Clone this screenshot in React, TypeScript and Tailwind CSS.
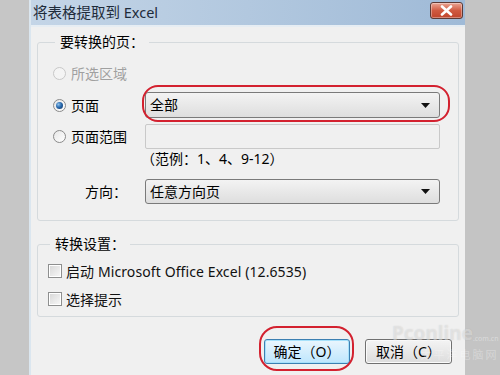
import React from "react";

const font = "font-['Noto_Sans','Noto_Sans_CJK_SC',sans-serif]";

function Radio({ checked, disabled }: { checked?: boolean; disabled?: boolean }) {
  return (
    <span
      className={`flex h-[13px] w-[13px] items-center justify-center rounded-full border ${
        disabled ? "border-[#c8c8c8] bg-[#f4f4f4]" : "border-[#8a8a8a] bg-gradient-to-br from-[#e6e6e6] to-[#ffffff]"
      }`}
    >
      {checked && (
        <span className="h-[7px] w-[7px] rounded-full bg-[radial-gradient(circle_at_35%_35%,#8fc1ea_0%,#2a6bb0_45%,#0f2f5a_100%)]" />
      )}
    </span>
  );
}

function Checkbox() {
  return (
    <span className="flex h-[14px] w-[14px] items-center justify-center border border-[#8e8f8f] bg-white">
      <span className="h-[10px] w-[10px] bg-gradient-to-br from-[#d9d9d9] to-[#f6f6f6]" />
    </span>
  );
}

function Select({ value }: { value: string }) {
  return (
    <div className="flex h-full w-full items-center justify-between rounded-[3px] border border-[#7a7a7a] bg-gradient-to-b from-[#f3f3f3] to-[#dedede] pl-[4px] pr-[9px]">
      <span className="text-[14px] leading-none text-black">{value}</span>
      <svg width="9" height="5" viewBox="0 0 9 5">
        <path d="M0 0 H9 L4.5 5 Z" fill="#111" />
      </svg>
    </div>
  );
}

export default function App() {
  return (
    <div className={`relative flex h-[375px] w-[500px] overflow-hidden bg-[#c5c5c5] ${font}`}>
      <div className="w-[29px] shrink-0 bg-[#c6c6c6]" />
      <div className="flex w-[436px] shrink-0 flex-col border-l-2 border-[#dbe6ef] bg-[#f0f0f0]">
        {/* Title bar */}
        <div className="flex h-[25px] shrink-0 items-center justify-between bg-gradient-to-r from-[#c4d5e7] via-[#b2c8df] to-[#9fbad7] pl-[2px] pr-[2px]">
          <span className="text-[14.5px] leading-none text-[#1e2b3a]">将表格提取到 Excel</span>
          <div className="mt-[-4px] flex h-[17px] w-[33px] items-center justify-center rounded-[3px] border border-[#5d3a35] bg-gradient-to-b from-[#e9a594] via-[#d05a41] to-[#c0452c] shadow-[inset_0_0_0_1px_rgba(255,255,255,0.35)]">
            <svg width="13" height="11" viewBox="0 0 13 11">
              <path d="M2 1.5 L11 9.5 M11 1.5 L2 9.5" stroke="#fff" strokeWidth="2.6" strokeLinecap="round" />
            </svg>
          </div>
        </div>
        <div className="h-[2px] shrink-0 bg-[#e6edf3]" />

        {/* Body */}
        <div className="flex flex-col px-[6px] pt-[5px]">
          <fieldset className="h-[189px] rounded-[3px] border border-[#d5dadd] px-[15px]">
            <legend className="ml-[2px] px-[5px] text-[14px] leading-[20px] text-black">要转换的页：</legend>
            <div className="flex flex-col">
              <div className="mt-[10px] flex h-[22px] items-center gap-[5px]">
                <Radio disabled />
                <span className="text-[14px] text-[#a0a0a0]">所选区域</span>
              </div>
              <div className="mt-[8px] flex h-[26px] items-center">
                <div className="flex w-[92px] items-center gap-[5px]">
                  <Radio checked />
                  <span className="text-[14px] text-black">页面</span>
                </div>
                <div className="relative h-full w-[295px]">
                  <Select value="全部" />
                  <div className="pointer-events-none absolute bottom-[-4px] left-[-3px] right-[-10px] top-[-7px] rounded-[16px] border-[2.5px] border-[#d3212f]" />
                </div>
              </div>
              <div className="mt-[6px] flex h-[25px] items-center">
                <div className="flex w-[92px] items-center gap-[5px]">
                  <Radio />
                  <span className="text-[14px] text-black">页面范围</span>
                </div>
                <div className="h-full w-[295px] rounded-[2px] border border-[#c9c9c9] bg-[#f0f0f0]" />
              </div>
              <div className="mt-[1px] flex h-[16px] items-center pl-[88px] text-[14px] text-black">
                （范例：1、4、9-12）
              </div>
              <div className="mt-[13px] flex h-[25px] items-center">
                <div className="flex w-[92px] justify-end pr-[18px]">
                  <span className="text-[14px] text-black">方向：</span>
                </div>
                <div className="h-full w-[295px]">
                  <Select value="任意方向页" />
                </div>
              </div>
            </div>
          </fieldset>

          <fieldset className="mt-[13px] h-[83px] rounded-[3px] border border-[#d5dadd] px-[10px]">
            <legend className="ml-[2px] px-[5px] text-[14px] leading-[20px] text-black">转换设置：</legend>
            <div className="flex flex-col">
              <div className="mt-[9px] flex h-[16px] items-center gap-[4px]">
                <Checkbox />
                <span className="text-[14px] tracking-[0.1px] text-[#111]">启动 Microsoft Office Excel (12.6535)</span>
              </div>
              <div className="mt-[12px] flex h-[16px] items-center gap-[4px]">
                <Checkbox />
                <span className="text-[14px] text-[#111]">选择提示</span>
              </div>
            </div>
          </fieldset>

          <div className="mt-[22px] flex justify-end gap-[15px] pr-[7px]">
            <div className="relative">
              <button className="flex h-[25px] w-[86px] items-center justify-center rounded-[3px] border border-[#3c7fb1] bg-gradient-to-b from-[#eaf6fd] to-[#bee6fd] text-[14px] text-black shadow-[inset_0_0_0_1px_#a6e1fb]">
                确定（O）
              </button>
              <div className="pointer-events-none absolute bottom-[-7px] left-[-5px] right-[-4px] top-[-13px] rounded-[18px] border-[2.5px] border-[#d3212f]" />
            </div>
            <button className="flex h-[25px] w-[87px] items-center justify-center rounded-[3px] border border-[#707070] bg-gradient-to-b from-[#f4f4f4] to-[#dcdcdc] text-[14px] text-black shadow-[inset_0_0_0_1px_#fafafa]">
              取消（C）
            </button>
          </div>
        </div>
      </div>
      <div className="w-[35px] shrink-0 bg-[#c4c4c4]" />
      <div className="pointer-events-none absolute left-[392px] top-[324px] flex flex-col items-end">
        <div className="flex items-end">
          <span className="text-[19px] font-bold leading-none text-white/40 [text-shadow:0_0_1px_rgba(140,140,140,0.35)]">Pconline</span>
          <span className="mb-[1px] text-[7px] leading-none text-white/40">.com.cn</span>
        </div>
        <span className="mt-[6px] text-[11px] leading-none tracking-[2px] text-white/30">太平洋电脑网</span>
      </div>
    </div>
  );
}
